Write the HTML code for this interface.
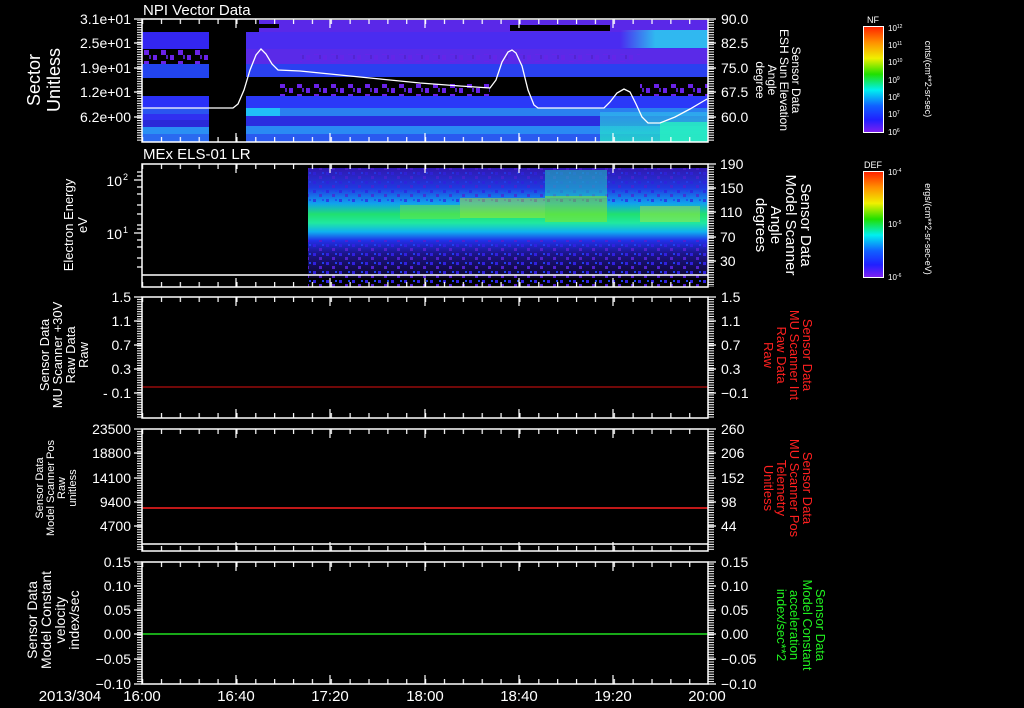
<!DOCTYPE html>
<html><head><meta charset="utf-8"><style>
html,body{margin:0;padding:0;background:#000;}
svg{display:block;}
text{font-family:"Liberation Sans",sans-serif;fill:#fff;}
</style></head><body>
<svg width="1024" height="708" viewBox="0 0 1024 708" xmlns="http://www.w3.org/2000/svg">
<defs>
<pattern id="xt" x="142" y="0" width="18.867" height="10" patternUnits="userSpaceOnUse"><rect x="0" y="0" width="1.2" height="10" fill="#fff"/></pattern>
<pattern id="yt" x="0" y="0" width="10" height="2.45" patternUnits="userSpaceOnUse"><rect x="0" y="0" width="10" height="1" fill="#fff"/></pattern>
<pattern id="dots" x="0" y="0" width="17" height="11" patternUnits="userSpaceOnUse"><rect x="0" y="0" width="4" height="5" fill="#6a22e8"/><rect x="8" y="6" width="5" height="5" fill="#6a22e8"/><rect x="13" y="0" width="2" height="4" fill="#5020c0"/></pattern>
<pattern id="noise" x="0" y="0" width="13" height="9" patternUnits="userSpaceOnUse"><rect x="1" y="1" width="3" height="3" fill="#3020e0"/><rect x="7" y="5" width="3" height="3" fill="#5020d0"/><rect x="10" y="1" width="2" height="2" fill="#2040f0"/></pattern>
<linearGradient id="rb" x1="0" y1="0" x2="0" y2="1">
<stop offset="0" stop-color="#ff2000"/><stop offset="0.15" stop-color="#ff9000"/><stop offset="0.3" stop-color="#f0f000"/><stop offset="0.45" stop-color="#20e000"/><stop offset="0.6" stop-color="#00f0f0"/><stop offset="0.75" stop-color="#1060ff"/><stop offset="0.88" stop-color="#2020ff"/><stop offset="1" stop-color="#8020f0"/></linearGradient>
<linearGradient id="els" x1="0" y1="0" x2="0" y2="1">
<stop offset="0" stop-color="#3018b0"/><stop offset="0.18" stop-color="#2038e0"/><stop offset="0.32" stop-color="#10a0f0"/><stop offset="0.42" stop-color="#20e070"/><stop offset="0.5" stop-color="#20e8a0"/><stop offset="0.58" stop-color="#10b0f0"/><stop offset="0.66" stop-color="#2030e8"/><stop offset="0.78" stop-color="#1c1488"/><stop offset="1" stop-color="#0c0628"/></linearGradient>
<linearGradient id="cy" x1="0" y1="0" x2="0" y2="1"><stop offset="0" stop-color="#30b0f0"/><stop offset="1" stop-color="#20f0c0"/></linearGradient>
<linearGradient id="fadeR" x1="0" y1="0" x2="1" y2="0"><stop offset="0" stop-color="#30b8f0" stop-opacity="0"/><stop offset="0.4" stop-color="#30b8f0" stop-opacity="1"/></linearGradient>
</defs>

<!-- Panel 1 spectrogram -->
<g>
<rect x="142" y="32" width="67" height="17" fill="#3326f0"/>
<rect x="142" y="64" width="67" height="14" fill="#2244ee"/>
<rect x="142" y="96" width="67" height="12" fill="#2a30f8"/>
<rect x="142" y="108" width="67" height="6" fill="#2a55f0"/>
<rect x="142" y="114" width="67" height="6" fill="#3030f0"/>
<rect x="142" y="120" width="67" height="7" fill="#2a2ad8"/>
<rect x="142" y="127" width="67" height="7" fill="#2a90f4"/>
<rect x="142" y="134" width="67" height="8" fill="#2a6af0"/>
<rect x="142" y="49" width="67" height="15" fill="url(#dots)"/>
<rect x="246" y="32" width="462" height="17" fill="#4a2cf0"/>
<rect x="259" y="20" width="449" height="12" fill="#5a28e8"/>
<rect x="246" y="49" width="462" height="15" fill="#5a2ae8"/>
<rect x="300" y="54" width="340" height="8" fill="url(#dots)" opacity="0.6"/>
<rect x="246" y="64" width="462" height="13" fill="#2a40f0"/>
<rect x="280" y="84" width="210" height="12" fill="url(#dots)"/>
<rect x="640" y="84" width="68" height="12" fill="url(#dots)"/>
<rect x="246" y="96" width="462" height="12" fill="#2a38f8"/>
<rect x="246" y="108" width="34" height="8" fill="#20c0f8"/>
<rect x="280" y="108" width="428" height="8" fill="#2a80f0"/>
<rect x="246" y="116" width="462" height="10" fill="#2a2ee0"/>
<rect x="246" y="126" width="462" height="8" fill="#2a8af4"/>
<rect x="246" y="134" width="462" height="8" fill="#2a5af0"/>
<rect x="620" y="30" width="88" height="18" fill="url(#fadeR)"/>
<rect x="600" y="112" width="108" height="30" fill="url(#cy)" opacity="0.75"/>
<rect x="660" y="122" width="48" height="20" fill="#28f0c0" opacity="0.8"/>
<rect x="510" y="25" width="100" height="6" fill="#000"/>
<rect x="259" y="24" width="20" height="4" fill="#000"/>
</g>
<polyline fill="none" stroke="#fff" stroke-width="1.3" points="142,108 233,108 238,104 244,90 250,70 256,55 261,49 266,54 272,64 278,70 300,71 340,75 380,79 420,83 460,86 490,88 496,80 502,62 508,52 512,50 516,53 522,66 528,90 534,105 538,108 604,108 610,102 617,93 624,89 630,92 636,104 642,117 648,123 660,123 675,117 690,109 707,99"/>

<!-- Panel 2 spectrogram -->
<rect x="308" y="168" width="400" height="110" fill="url(#els)"/>
<rect x="308" y="168" width="400" height="35" fill="url(#noise)" opacity="0.7"/>
<rect x="308" y="240" width="400" height="47" fill="url(#noise)"/>
<rect x="460" y="198" width="85" height="20" fill="#c0e820" opacity="0.45"/>
<rect x="545" y="170" width="62" height="28" fill="#20d8c0" opacity="0.5"/>
<rect x="545" y="196" width="62" height="26" fill="#90e820" opacity="0.5"/>
<rect x="640" y="206" width="60" height="16" fill="#c8e830" opacity="0.4"/>
<rect x="400" y="205" width="60" height="14" fill="#80e830" opacity="0.4"/>
<line x1="142" y1="275" x2="708" y2="275" stroke="#fff" stroke-width="1.5"/>

<!-- data lines -->
<line x1="142" y1="387" x2="708" y2="387" stroke="#e01010" stroke-width="1"/>
<line x1="142" y1="508" x2="708" y2="508" stroke="#ff2020" stroke-width="1.5"/>
<line x1="142" y1="544" x2="708" y2="544" stroke="#fff" stroke-width="1.5"/>
<line x1="142" y1="634" x2="708" y2="634" stroke="#20e020" stroke-width="1.5"/>

<!-- panel frames & ticks -->
<g fill="none" stroke="#fff" stroke-width="1.5">
<rect x="142" y="19" width="566" height="123"/>
<rect x="142" y="164" width="566" height="123"/>
<rect x="142" y="297" width="566" height="121"/>
<rect x="142" y="429" width="566" height="122"/>
<rect x="142" y="562" width="566" height="122"/>
</g>
<g fill="url(#xt)">
<rect x="142" y="19" width="566" height="5"/><rect x="142" y="137" width="566" height="5"/>
<rect x="142" y="164" width="566" height="5"/><rect x="142" y="282" width="566" height="5"/>
<rect x="142" y="297" width="566" height="5"/><rect x="142" y="413" width="566" height="5"/>
<rect x="142" y="429" width="566" height="5"/><rect x="142" y="546" width="566" height="5"/>
<rect x="142" y="562" width="566" height="5"/><rect x="142" y="679" width="566" height="5"/>
</g>
<g stroke="#fff" stroke-width="1.2">
<path d="M236 19v9M330 19v9M425 19v9M519 19v9M613 19v9M236 142v-9M330 142v-9M425 142v-9M519 142v-9M613 142v-9
M236 164v9M330 164v9M425 164v9M519 164v9M613 164v9M236 287v-9M330 287v-9M425 287v-9M519 287v-9M613 287v-9
M236 297v9M330 297v9M425 297v9M519 297v9M613 297v9M236 418v-9M330 418v-9M425 418v-9M519 418v-9M613 418v-9
M236 429v9M330 429v9M425 429v9M519 429v9M613 429v9M236 551v-9M330 551v-9M425 551v-9M519 551v-9M613 551v-9
M236 562v9M330 562v9M425 562v9M519 562v9M613 562v9M236 684v-9M330 684v-9M425 684v-9M519 684v-9M613 684v-9"/>
<path d="M134 19h8M134 43h8M134 68h8M134 92h8M134 117h8M708 19h8M708 43h8M708 68h8M708 92h8M708 117h8
M134 180h8M134 233h8M708 164h8M708 188h8M708 212h8M708 237h8M708 261h8
M134 297h8M134 321h8M134 345h8M134 369h8M134 393h8M708 297h8M708 321h8M708 345h8M708 369h8M708 393h8
M134 429h8M134 453h8M134 478h8M134 502h8M134 526h8M708 429h8M708 453h8M708 478h8M708 502h8M708 526h8
M134 562h8M134 586h8M134 610h8M134 634h8M134 659h8M134 684h8M708 562h8M708 586h8M708 610h8M708 634h8M708 659h8M708 684h8"/>
<path d="M137 172h5M137 176h5M137 187h5M137 194h5M137 205h5M137 214h5M137 225h5M137 229h5M137 240h5M137 247h5M137 258h5M137 267h5"/>
</g>
<g fill="url(#yt)">
<rect x="137" y="20" width="5" height="122"/><rect x="708" y="20" width="6" height="122"/>
<rect x="708" y="165" width="6" height="122"/>
<rect x="137" y="298" width="5" height="120"/><rect x="708" y="298" width="6" height="120"/>
<rect x="137" y="430" width="5" height="121"/><rect x="708" y="430" width="6" height="121"/>
<rect x="137" y="563" width="5" height="121"/><rect x="708" y="563" width="6" height="121"/>
</g>

<!-- titles -->
<text x="143" y="15" font-size="15">NPI Vector Data</text>
<text x="143" y="159" font-size="15">MEx ELS-01 LR</text>

<!-- left tick labels -->
<g font-size="14" text-anchor="end">
<text x="131" y="24">3.1e+01</text><text x="131" y="48">2.5e+01</text><text x="131" y="73">1.9e+01</text><text x="131" y="97">1.2e+01</text><text x="131" y="122">6.2e+00</text>
<text x="122" y="186">10</text><text x="122" y="239">10</text>
<text x="131" y="302">1.5</text><text x="131" y="326">1.1</text><text x="131" y="350">0.7</text><text x="131" y="374">0.3</text><text x="131" y="398">- 0.1</text>
<text x="131" y="434">23500</text><text x="131" y="458">18800</text><text x="131" y="483">14100</text><text x="131" y="507">9400</text><text x="131" y="531">4700</text>
<text x="131" y="567">0.15</text><text x="131" y="591">0.10</text><text x="131" y="615">0.05</text><text x="131" y="639">0.00</text><text x="131" y="664">−0.05</text><text x="131" y="689">−0.10</text>
</g>
<g font-size="9"><text x="123" y="180">2</text><text x="123" y="233">1</text></g>
<g font-size="14">
<text x="721" y="24">90.0</text><text x="721" y="48">82.5</text><text x="721" y="73">75.0</text><text x="721" y="97">67.5</text><text x="721" y="122">60.0</text>
<text x="720" y="169">190</text><text x="720" y="193">150</text><text x="720" y="217">110</text><text x="720" y="242">70</text><text x="720" y="266">30</text>
<text x="721" y="302">1.5</text><text x="721" y="326">1.1</text><text x="721" y="350">0.7</text><text x="721" y="374">0.3</text><text x="721" y="398">−0.1</text>
<text x="721" y="434">260</text><text x="721" y="458">206</text><text x="721" y="483">152</text><text x="721" y="507">98</text><text x="721" y="531">44</text>
<text x="721" y="567">0.15</text><text x="721" y="591">0.10</text><text x="721" y="615">0.05</text><text x="721" y="639">0.00</text><text x="721" y="664">−0.05</text><text x="721" y="689">−0.10</text>
</g>
<g font-size="15" text-anchor="middle">
<text x="70" y="701">2013/304</text><text x="142" y="701">16:00</text><text x="236" y="701">16:40</text><text x="330" y="701">17:20</text><text x="425" y="701">18:00</text><text x="519" y="701">18:40</text><text x="613" y="701">19:20</text><text x="707" y="701">20:00</text>
</g>

<g text-anchor="middle">
<text transform="translate(40,80) rotate(-90)" font-size="18"><tspan x="0" y="0">Sector</tspan><tspan x="0" y="20">Unitless</tspan></text>
<text transform="translate(73,225) rotate(-90)" font-size="13"><tspan x="0" y="0">Electron Energy</tspan><tspan x="0" y="14">eV</tspan></text>
<text transform="translate(49,355) rotate(-90)" font-size="13"><tspan x="0" y="0">Sensor Data</tspan><tspan x="0" y="13">MU Scanner +30V</tspan><tspan x="0" y="26">Raw Data</tspan><tspan x="0" y="39">Raw</tspan></text>
<text transform="translate(43,488) rotate(-90)" font-size="11"><tspan x="0" y="0">Sensor Data</tspan><tspan x="0" y="11">Model Scanner Pos</tspan><tspan x="0" y="22">Raw</tspan><tspan x="0" y="33">unitless</tspan></text>
<text transform="translate(37,620) rotate(-90)" font-size="14"><tspan x="0" y="0">Sensor Data</tspan><tspan x="0" y="14">Model Constant</tspan><tspan x="0" y="28">velocity</tspan><tspan x="0" y="42">index/sec</tspan></text>
</g>
<g text-anchor="middle">
<text transform="translate(792,80) rotate(90)" font-size="12"><tspan x="0" y="0">Sensor Data</tspan><tspan x="0" y="12">ESH Sun Elevation</tspan><tspan x="0" y="24">Angle</tspan><tspan x="0" y="36">degree</tspan></text>
<text transform="translate(801,225) rotate(90)" font-size="15"><tspan x="0" y="0">Sensor Data</tspan><tspan x="0" y="15">Model Scanner</tspan><tspan x="0" y="30">Angle</tspan><tspan x="0" y="45">degrees</tspan></text>
<text transform="translate(803,355) rotate(90)" font-size="13" style="fill:#ff2020"><tspan x="0" y="0">Sensor Data</tspan><tspan x="0" y="13">MU Scanner Int</tspan><tspan x="0" y="26">Raw Data</tspan><tspan x="0" y="39">Raw</tspan></text>
<text transform="translate(803,488) rotate(90)" font-size="13" style="fill:#ff2020"><tspan x="0" y="0">Sensor Data</tspan><tspan x="0" y="13">MU Scanner Pos</tspan><tspan x="0" y="26">Telemetry</tspan><tspan x="0" y="39">Unitless</tspan></text>
<text transform="translate(816,625) rotate(90)" font-size="13" style="fill:#20f020"><tspan x="0" y="0">Sensor Data</tspan><tspan x="0" y="13">Model Constant</tspan><tspan x="0" y="26">acceleration</tspan><tspan x="0" y="39">index/sec**2</tspan></text>
</g>

<rect x="863.5" y="26.5" width="20" height="106" fill="url(#rb)" stroke="#fff" stroke-width="1"/>
<rect x="863.5" y="171.5" width="20" height="106" fill="url(#rb)" stroke="#fff" stroke-width="1"/>
<text x="873" y="23" font-size="9" text-anchor="middle">NF</text>
<text x="873" y="168" font-size="9" text-anchor="middle">DEF</text>
<g font-size="8">
<text x="888" y="31">10<tspan font-size="5" dy="-3">12</tspan></text>
<text x="888" y="48">10<tspan font-size="5" dy="-3">11</tspan></text>
<text x="888" y="65">10<tspan font-size="5" dy="-3">10</tspan></text>
<text x="888" y="83">10<tspan font-size="5" dy="-3">9</tspan></text>
<text x="888" y="100">10<tspan font-size="5" dy="-3">8</tspan></text>
<text x="888" y="117">10<tspan font-size="5" dy="-3">7</tspan></text>
<text x="888" y="135">10<tspan font-size="5" dy="-3">6</tspan></text>
<text x="888" y="175">10<tspan font-size="5" dy="-3">-4</tspan></text>
<text x="888" y="227">10<tspan font-size="5" dy="-3">-5</tspan></text>
<text x="888" y="280">10<tspan font-size="5" dy="-3">-6</tspan></text>
</g>
<text transform="translate(925,79) rotate(90)" font-size="9" text-anchor="middle">cnts/(cm**2-sr-sec)</text>
<text transform="translate(925,229) rotate(90)" font-size="9" text-anchor="middle">ergs/(cm**2-sr-sec-eV)</text>
</svg>
</body></html>
